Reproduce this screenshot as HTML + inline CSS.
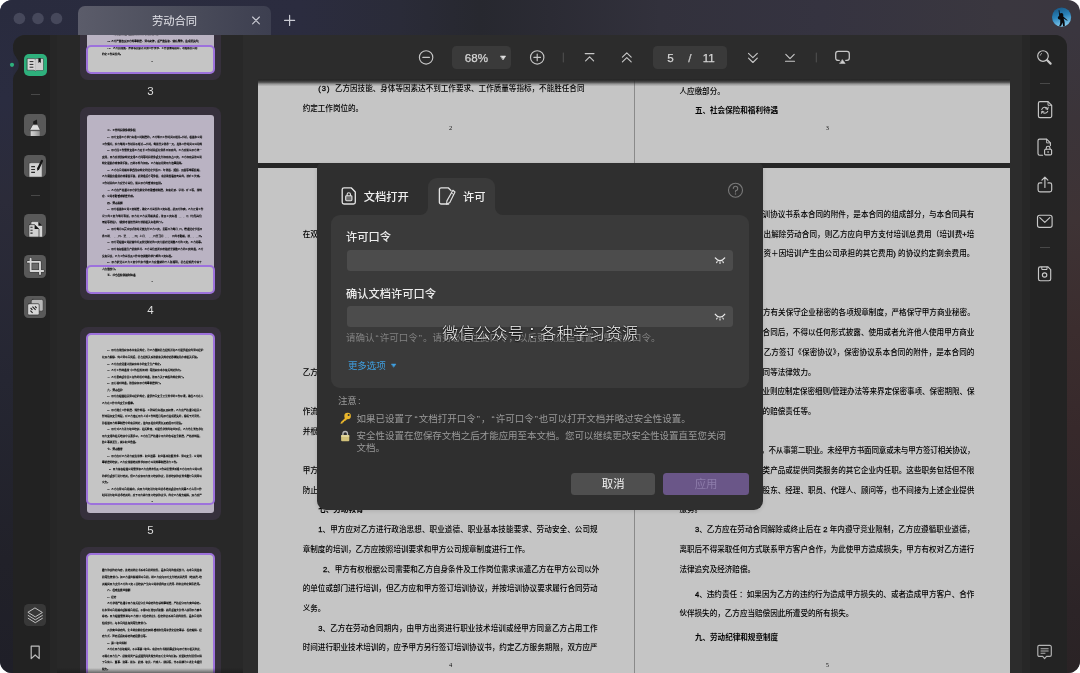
<!DOCTYPE html>
<html lang="zh-CN"><head><meta charset="utf-8"><title>劳动合同</title>
<style>
*{box-sizing:border-box;margin:0;padding:0}
html,body{width:1080px;height:673px;overflow:hidden;background:#fff}
body{font-family:"Liberation Sans","Noto Sans CJK SC",sans-serif;-webkit-font-smoothing:antialiased}
#w{position:absolute;left:0;top:0;width:1080px;height:673px;border-radius:12px;overflow:hidden;will-change:transform;
 background:linear-gradient(90deg,#292b3e 0px,#2b2c3f 300px,#2a2b38 400px,#27282f 480px,#2b2b34 550px,#32313c 660px,#353340 820px,#3a373f 1000px,#3a363f 1080px);}
#ls{position:absolute;left:0;top:0;width:20px;height:673px;background:linear-gradient(180deg,#292b3e 0px,#2a2c40 100px,#2b2b39 200px,#252632 380px,#212129 560px,#1f1f28 673px)}
#rstrip{position:absolute;left:1060px;top:30px;width:20px;height:643px;background:linear-gradient(180deg,#3a363f 0px,#3b3439 90px,#3e3335 190px,#3b2d2e 300px,#37292b 400px,#31272a 500px,#2c2427 580px,#2a2325 643px)}
.abs{position:absolute}
#inner{position:absolute;left:13px;top:35px;width:1054px;height:640px;border-radius:12px 12px 0 0;overflow:hidden;background:#292929}
#sb{position:absolute;left:0;top:0;width:44px;height:640px;background:linear-gradient(90deg,#222222 0,#222222 37px,#262626 37px)}
#tp{position:absolute;left:44px;top:0;width:186px;height:640px;background:#282828;overflow:hidden}
#main{position:absolute;left:230px;top:0;width:779px;height:640px;background:#2c2c2c;overflow:hidden}
#rs{position:absolute;left:1009px;top:0;width:45px;height:640px;background:linear-gradient(90deg,#272727 0,#272727 8px,#232323 8px)}
#tb{position:absolute;left:0;top:0;width:779px;height:43.5px;background:#2c2c2c}
.tsh{position:absolute;top:42.6px;height:8.6px;background:linear-gradient(180deg,rgba(38,38,38,1) 0,rgba(38,38,38,1) 1.2px,rgba(38,38,38,.92) 2.8px,rgba(38,38,38,.7) 4.4px,rgba(38,38,38,.4) 5.6px,rgba(38,38,38,.18) 6.8px,rgba(38,38,38,0) 8.6px)}
.box{position:absolute;top:11.4px;height:22.3px;border-radius:4.5px;background:#3a3a3a}
.tbt{-webkit-text-stroke:.25px #d6d6d6;position:absolute;top:11.5px;height:22.3px;line-height:22.3px;font-size:11.6px;color:#d6d6d6;text-align:center;white-space:nowrap}
.pg{position:absolute;background:#c5c5c5;overflow:hidden;width:376px}
.l{position:absolute;height:12px;line-height:12px;font-size:7.57px;font-weight:500;color:#000;white-space:nowrap;font-family:"Liberation Sans","Noto Sans CJK SC",sans-serif}
.l.b{font-weight:700}
.d{-webkit-text-stroke:.28px #000}
.l.j{text-align:justify;text-align-last:justify}
.pn{position:absolute;height:10px;line-height:10px;font-size:6.4px;text-align:center;color:#111;font-family:"Liberation Serif",serif}
.card{position:absolute;left:23.2px;width:140.6px;height:192.4px;border-radius:8px;background:#36303c}
.tpg{position:absolute;left:6.8px;top:7.5px;width:127.2px;height:178px;border-radius:3px;background:#bab3c3;overflow:hidden}
.tin .l{-webkit-text-stroke:.3px #000}
.tin .pn{-webkit-text-stroke:.4px #000}
.tin{position:absolute;left:0;top:0;width:376px;height:531.8px;transform-origin:0 0;transform:scale(0.3383,0.3338)}
.vpb{position:absolute;left:0;width:127.2px;border-radius:4.5px;background:#c5c5c5}
.vp{position:absolute;left:6.2px;width:128.4px;border:2px solid #9d71dc;border-radius:5px}
.tl{position:absolute;left:23.2px;width:140.4px;height:16px;line-height:16px;text-align:center;font-size:11.5px;color:#dedede}
.ib{position:absolute;left:11.1px;width:22.4px;height:22.4px;border-radius:4.5px;background:#595959}
.sep{position:absolute;height:1px;background:#484848}
#modal{position:absolute;left:317.3px;top:162.5px;width:445.6px;height:347px;border-radius:5px 5px 9px 9px;background:#2f2f2f;box-shadow:0 1px 4px rgba(0,0,0,.12)}
#panel{position:absolute;left:13.7px;top:52.5px;width:417.8px;height:172.5px;border-radius:9px;background:#3a3a3a}
#atab{position:absolute;left:111.1px;top:15.3px;width:67.1px;height:40px;border-radius:9px 9px 0 0;background:#3a3a3a}
.mt{position:absolute;white-space:nowrap}
.lab{font-size:11.25px;font-weight:500;color:#ececec;height:16px;line-height:16px}
.inp{position:absolute;left:29.3px;width:386.4px;height:20.9px;border-radius:3.5px;background:#4c4c4c}
.q{margin:0 1px}
.note{font-size:9.48px;color:#9a9a9a;height:13px;line-height:13px;letter-spacing:0}
.btn{position:absolute;top:310.8px;height:21.6px;line-height:23.8px;border-radius:3.5px;text-align:center;font-size:11.4px}
</style></head><body>
<div id="w">
<div id="ls"></div><div id="rstrip"></div>
<div class="abs" style="left:78px;top:5.5px;width:193px;height:30px;border-radius:7px 7px 0 0;background:linear-gradient(90deg,#5b5c6a 0%,#4c4e5c 50%,#3d3f50 100%)"></div>
<div class="abs" style="left:78px;top:11.5px;width:193px;height:18px;line-height:18px;text-align:center;font-size:11.3px;color:#e4e4ea;white-space:nowrap">劳动合同</div>
<div id="inner">
<div id="sb"></div>
<div id="tp">
<div class="card" style="top:-147.5px">
<div class="tpg">
<div class="vpb" style="top:150.4px;height:28.4px"></div>
<div class="tin">
<div class="l" style="left:60.0px;top:392.7px;"><span class="d">2</span>、乙方有下列情形之一的，甲方可以解除本合同：</div>
<div class="l" style="left:60.0px;top:412.4px;"><span class="d">(1)</span> 乙方在试用期间被证明不符合录用条件的；</div>
<div class="l" style="left:60.0px;top:432.1px;"><span class="d">(2)</span> 乙方严重违反甲方规章制度、劳动纪律，或严重失职、营私舞弊，造成损失的；</div>
<div class="l" style="left:60.0px;top:451.8px;"><span class="d" style="letter-spacing:1.1px">(3)</span>&nbsp; 乙方因技能、身体等因素达不到工作要求、工作质量等指标，不能胜任合同</div>
<div class="l" style="left:44.5px;top:472.2px;">约定工作岗位的。</div>
<div class="pn" style="left:0;width:385px;top:492.4px">2</div>
</div></div>
<div class="vp" style="top:157.9px;height:28.4px"></div>
</div>
<div class="tl" style="top:47.5px">3</div>
<div class="card" style="top:72.4px">
<div class="tpg">
<div class="vpb" style="top:150.4px;height:28.4px"></div>
<div class="tin">
<div class="l b" style="left:60.0px;top:41.3px;">三、工作时间和休息休假</div>
<div class="l j" style="left:60.0px;top:61.0px;width:279.5px;"><span class="d">1</span>、甲方安排乙方执行标准工时制度的，乙方每日工作时间不超过<span class="d">8</span>小时，根据本公司</div>
<div class="l" style="left:44.5px;top:80.7px;">工作情况，实行每周工作时间不超过<span class="d">40</span>小时，每周至少休息一天，具体工作时间以公司规</div>
<div class="l j" style="left:60.0px;top:100.4px;width:279.5px;"><span class="d">2</span>、甲方因工作需要安排乙方延长工作时间或在休息日加班的，乙方应服从甲方统一</div>
<div class="l j" style="left:44.5px;top:120.1px;width:295.0px;">安排，甲方应按国家规定安排乙方同等时间补休或支付加班加点工资，乙方加班须按公司</div>
<div class="l" style="left:44.5px;top:139.8px;">规定提前办理审批手续，否则不视为加班。乙方有权拒绝甲方违章指挥。</div>
<div class="l j" style="left:60.0px;top:159.5px;width:279.5px;"><span class="d">3</span>、乙方在合同期内享受国家规定的法定节假日、年休假、婚假、丧假等带薪假期，</div>
<div class="l j" style="left:44.5px;top:179.2px;width:295.0px;">乙方请假应提前办理请假手续，经批准后方可休假，未经批准擅自离岗的，按旷工处理。</div>
<div class="l" style="left:44.5px;top:198.9px;">工作时间内乙方应坚守岗位，服从甲方的管理和安排。</div>
<div class="l j" style="left:60.0px;top:218.6px;width:279.5px;"><span class="d">4</span>、乙方应严格遵守甲方依法制定的考勤管理制度，如有迟到、早退、旷工等，按规</div>
<div class="l" style="left:44.5px;top:238.3px;">定、公司考勤管理制度处理。</div>
<div class="l b" style="left:60.0px;top:258.0px;">四、劳动报酬</div>
<div class="l j" style="left:60.0px;top:277.7px;width:279.5px;"><span class="d">1</span>、甲方根据本公司工资制度，确定乙方岗位的工资标准，经双方协商，乙方正常工作</div>
<div class="l j" style="left:44.5px;top:297.4px;width:295.0px;">况下的工资为每月税前，甲方在乙方试用期满后，按其工资标准<span class="d">______</span>元（包括岗位</div>
<div class="l" style="left:44.5px;top:317.1px;">津贴等补贴），（绩效考核结果另行按照相关标准执行）。</div>
<div class="l j" style="left:60.0px;top:336.8px;width:279.5px;"><span class="d">2</span>、甲方每月以货币形式按时足额支付乙方工资，发薪日为每月<span class="d">_</span>日，若遇法定节假日</div>
<div class="l" style="left:44.5px;top:356.5px;">息日则<span class="d">______</span>日、至<span class="d">______</span>日；上月<span class="d">______</span>日至当月<span class="d">______</span>日的考勤期，按<span class="d">______</span>日。</div>
<div class="l" style="left:60.0px;top:376.2px;"><span class="d">3</span>、甲方可根据公司经营状况及依法制定的工资分配办法调整乙方的工资，乙方同意。</div>
<div class="l j" style="left:60.0px;top:395.9px;width:279.5px;"><span class="d">4</span>、甲方有权根据生产经营状况、乙方岗位变更和考核结果调整乙方的工资待遇，乙方</div>
<div class="l" style="left:44.5px;top:415.6px;">没有异议，乙方工作岗位及工作内容调整的执行新的工资标准。</div>
<div class="l j" style="left:60.0px;top:435.3px;width:279.5px;"><span class="d">5</span>、甲方依法从乙方工资中代扣代缴乙方应缴纳的个人所得税，社会保险费中由个</div>
<div class="l" style="left:44.5px;top:455.0px;">人应缴部分。</div>
<div class="l b" style="left:60.0px;top:474.7px;">五、社会保险和福利待遇</div>
<div class="pn" style="left:0;width:385px;top:492.4px">3</div>
</div></div>
<div class="vp" style="top:157.9px;height:28.4px"></div>
</div>
<div class="tl" style="top:267.4px">4</div>
<div class="card" style="top:292.3px">
<div class="tpg">
<div class="vpb" style="top:-1.9px;height:172.3px"></div>
<div class="tin">
<div class="l j" style="left:60.0px;top:41.3px;width:279.5px;"><span class="d">1</span>、甲方应按国家和本市有关规定，为乙方缴纳社会保险并向乙方提供相应的劳动保护</div>
<div class="l" style="left:44.5px;top:61.0px;">在双方解除、终止劳动合同后，社会保险关系按照有关规定转移接续并办理相关手续。</div>
<div class="l" style="left:60.0px;top:80.7px;"><span class="d">2</span>、乙方应自觉遵守国家和本市的安全生产规定。</div>
<div class="l" style="left:60.0px;top:100.4px;"><span class="d">3</span>、乙方工伤待遇按《工伤保险条例》等国家和本市有关规定执行。</div>
<div class="l" style="left:60.0px;top:120.1px;"><span class="d">4</span>、乙方患病或非因工负伤的医疗待遇，按甲方关于病假的规定执行。</div>
<div class="l" style="left:60.0px;top:139.8px;"><span class="d">5</span>、其它福利待遇，按国家和甲方规章制度执行。</div>
<div class="l b" style="left:60.0px;top:159.5px;">六、劳动保护</div>
<div class="l j" style="left:60.0px;top:179.2px;width:279.5px;"><span class="d">1</span>、甲方应根据相关劳动保护规定，提供符合安全卫生要求的工作环境，确保乙方在人</div>
<div class="l" style="left:44.5px;top:198.9px;">乙方在工作中的安全和健康。</div>
<div class="l j" style="left:60.0px;top:218.6px;width:279.5px;"><span class="d">2</span>、甲方建立工作制度、操作规程、工种岗位标准及其纪律，乙方应严格遵守相关工</div>
<div class="l j" style="left:44.5px;top:238.3px;width:295.0px;">作流程和安全规程，对乙方违反甲方上述工作规范且给甲方造成损失的，除给予处罚外，</div>
<div class="l" style="left:44.5px;top:258.0px;">并根据甲方规章制度中的有关规定，追究其相应的责任及赔偿甲方损失。</div>
<div class="l j" style="left:60.0px;top:277.7px;width:279.5px;"><span class="d">3</span>、甲方对乙方进行职业培训、相关教育，对提升必要的职业知识，乙方也主要务必在</div>
<div class="l j" style="left:44.5px;top:297.4px;width:295.0px;">甲方安排的相关培训中认真学习，乙方应当严格遵守甲方的各项安全制度，严格按规程，</div>
<div class="l" style="left:44.5px;top:317.1px;">防止事故发生，减少职业危害。</div>
<div class="l b" style="left:60.0px;top:336.8px;">七、劳动教育</div>
<div class="l j" style="left:60.0px;top:356.5px;width:279.5px;"><span class="d">1</span>、甲方应对乙方进行政治思想、职业道德、职业基本技能要求、劳动安全、公司规</div>
<div class="l" style="left:44.5px;top:376.2px;">章制度的培训，乙方应按照培训要求和甲方公司规章制度进行工作。</div>
<div class="l j" style="left:64.7px;top:395.9px;width:274.9px;"><span class="d">2</span>、甲方有权根据公司需要和乙方自身条件及工作岗位需求派遣乙方在甲方公司以外</div>
<div class="l j" style="left:44.5px;top:415.6px;width:295.0px;">的单位或部门进行培训，但乙方应和甲方签订培训协议，并按培训协议要求履行合同劳动</div>
<div class="l" style="left:44.5px;top:435.3px;">义务。</div>
<div class="l j" style="left:60.0px;top:455.0px;width:279.5px;"><span class="d">3</span>、乙方在劳动合同期内，由甲方出资进行职业技术培训或经甲方同意乙方占用工作</div>
<div class="l j" style="left:44.5px;top:474.7px;width:295.0px;">时间进行职业技术培训的，应予甲方另行签订培训协议书，约定乙方服务期限，双方应严</div>
<div class="pn" style="left:0;width:385px;top:492.4px">4</div>
</div></div>
<div class="vp" style="top:5.6px;height:172.3px"></div>
</div>
<div class="tl" style="top:487.3px">5</div>
<div class="card" style="top:512.2px">
<div class="tpg">
<div class="vpb" style="top:-1.9px;height:201.9px"></div>
<div class="tin">
<div class="l j" style="left:44.5px;top:41.3px;width:295.0px;">履行协议约定内容，该培训协议书系本合同的附件，是本合同的组成部分，与本合同具有</div>
<div class="l j" style="left:44.5px;top:61.0px;width:295.0px;">同等法律效力。如乙方提出解除劳动合同，则乙方应向甲方支付培训总费用（培训费<span class="d">+</span>培</div>
<div class="l j" style="left:44.5px;top:80.7px;width:295.0px;">训期间甲方支付乙方的工资＋因培训产生由公司承担的其它费用<span class="d">)</span> 的协议约定剩余费用。</div>
<div class="l b" style="left:60.0px;top:100.4px;">八、保密及竞业限制</div>
<div class="l" style="left:60.0px;top:120.1px;"><span class="d">1</span>、保密</div>
<div class="l j" style="left:60.0px;top:139.8px;width:279.5px;">乙方承诺严格遵守甲方有关保守企业秘密的各项规章制度，严格保守甲方商业秘密。</div>
<div class="l j" style="left:44.5px;top:159.5px;width:295.0px;">在本劳动合同期内或解除合同后，不得以任何形式披露、使用或者允许他人使用甲方商业</div>
<div class="l j" style="left:44.5px;top:179.2px;width:295.0px;">秘密。甲方根据需要另与乙方签订《保密协议》，保密协议系本合同的附件，是本合同的</div>
<div class="l" style="left:44.5px;top:198.9px;">组成部分，与本合同具有同等法律效力。</div>
<div class="l j" style="left:60.0px;top:218.6px;width:279.5px;letter-spacing:-0.15px;">凡涉商业秘密的，企业则应制定保密细则<span class="d">/</span>管理办法等来界定保密事项、保密期限、保</div>
<div class="l" style="left:44.5px;top:238.3px;">密方式、泄密后侵犯秘密的赔偿责任等。</div>
<div class="l" style="left:60.0px;top:258.0px;"><span class="d">2</span>、第二职业限制</div>
<div class="l j" style="left:60.0px;top:277.7px;width:279.5px;letter-spacing:-0.23px;">乙方在甲方任职期间，不从事第二职业。未经甲方书面同意或未与甲方签订相关协议，</div>
<div class="l j" style="left:44.5px;top:297.4px;width:295.0px;">不得在甲方生产、经营同类产品或提供同类服务的其它企业内任职。这些职务包括但不限</div>
<div class="l j" style="left:44.5px;top:317.1px;width:295.0px;">于合伙人、董事、监事、股东、经理、职员、代理人、顾问等，也不间接为上述企业提供</div>
<div class="l" style="left:44.5px;top:336.8px;">服务。</div>
<div class="l j" style="left:60.0px;top:356.5px;width:279.5px;"><span class="d">3</span>、乙方应在劳动合同解除或终止后在 <span class="d">2</span> 年内遵守竞业限制，乙方应遵循职业道德，</div>
<div class="l j" style="left:44.5px;top:376.2px;width:295.0px;">离职后不得采取任何方式联系甲方客户合作，为此使甲方造成损失，甲方有权对乙方进行</div>
<div class="l" style="left:44.5px;top:395.9px;">法律追究及经济赔偿。</div>
<div class="l j" style="left:60.0px;top:421.0px;width:279.5px;"><span class="d">4</span>、违约责任 ：如果因为乙方的违约行为造成甲方损失的、或者造成甲方客户、合作</div>
<div class="l" style="left:44.5px;top:440.4px;">伙伴损失的，乙方应当赔偿因此所遭受的所有损失。</div>
<div class="l b" style="left:60.0px;top:464.7px;">九、劳动纪律和规章制度</div>
<div class="pn" style="left:0;width:385px;top:492.4px">5</div>
</div></div>
<div class="vp" style="top:5.6px;height:201.9px"></div>
</div>
<div class="abs" style="left:0;bottom:0;width:186px;height:7px;background:linear-gradient(180deg,rgba(24,24,24,0),rgba(24,24,24,.75))"></div>
</div>
<div id="main">
<div class="pg" style="left:15.2px;top:0.0px;height:127.8px;width:376.0px"><div class="abs" style="left:0;top:-404.3px;width:376px;height:531.8px"><div class="l" style="left:60.0px;top:392.7px;"><span class="d">2</span>、乙方有下列情形之一的，甲方可以解除本合同：</div>
<div class="l" style="left:60.0px;top:412.4px;"><span class="d">(1)</span> 乙方在试用期间被证明不符合录用条件的；</div>
<div class="l" style="left:60.0px;top:432.1px;"><span class="d">(2)</span> 乙方严重违反甲方规章制度、劳动纪律，或严重失职、营私舞弊，造成损失的；</div>
<div class="l" style="left:60.0px;top:451.8px;"><span class="d" style="letter-spacing:1.1px">(3)</span>&nbsp; 乙方因技能、身体等因素达不到工作要求、工作质量等指标，不能胜任合同</div>
<div class="l" style="left:44.5px;top:472.2px;">约定工作岗位的。</div>
<div class="pn" style="left:0;width:385px;top:492.4px">2</div></div></div>
<div class="pg" style="left:391.9px;top:0.0px;height:127.8px;width:375.2px"><div class="abs" style="left:0;top:-404.3px;width:376px;height:531.8px"><div class="l b" style="left:60.0px;top:41.3px;">三、工作时间和休息休假</div>
<div class="l j" style="left:60.0px;top:61.0px;width:279.5px;"><span class="d">1</span>、甲方安排乙方执行标准工时制度的，乙方每日工作时间不超过<span class="d">8</span>小时，根据本公司</div>
<div class="l" style="left:44.5px;top:80.7px;">工作情况，实行每周工作时间不超过<span class="d">40</span>小时，每周至少休息一天，具体工作时间以公司规</div>
<div class="l j" style="left:60.0px;top:100.4px;width:279.5px;"><span class="d">2</span>、甲方因工作需要安排乙方延长工作时间或在休息日加班的，乙方应服从甲方统一</div>
<div class="l j" style="left:44.5px;top:120.1px;width:295.0px;">安排，甲方应按国家规定安排乙方同等时间补休或支付加班加点工资，乙方加班须按公司</div>
<div class="l" style="left:44.5px;top:139.8px;">规定提前办理审批手续，否则不视为加班。乙方有权拒绝甲方违章指挥。</div>
<div class="l j" style="left:60.0px;top:159.5px;width:279.5px;"><span class="d">3</span>、乙方在合同期内享受国家规定的法定节假日、年休假、婚假、丧假等带薪假期，</div>
<div class="l j" style="left:44.5px;top:179.2px;width:295.0px;">乙方请假应提前办理请假手续，经批准后方可休假，未经批准擅自离岗的，按旷工处理。</div>
<div class="l" style="left:44.5px;top:198.9px;">工作时间内乙方应坚守岗位，服从甲方的管理和安排。</div>
<div class="l j" style="left:60.0px;top:218.6px;width:279.5px;"><span class="d">4</span>、乙方应严格遵守甲方依法制定的考勤管理制度，如有迟到、早退、旷工等，按规</div>
<div class="l" style="left:44.5px;top:238.3px;">定、公司考勤管理制度处理。</div>
<div class="l b" style="left:60.0px;top:258.0px;">四、劳动报酬</div>
<div class="l j" style="left:60.0px;top:277.7px;width:279.5px;"><span class="d">1</span>、甲方根据本公司工资制度，确定乙方岗位的工资标准，经双方协商，乙方正常工作</div>
<div class="l j" style="left:44.5px;top:297.4px;width:295.0px;">况下的工资为每月税前，甲方在乙方试用期满后，按其工资标准<span class="d">______</span>元（包括岗位</div>
<div class="l" style="left:44.5px;top:317.1px;">津贴等补贴），（绩效考核结果另行按照相关标准执行）。</div>
<div class="l j" style="left:60.0px;top:336.8px;width:279.5px;"><span class="d">2</span>、甲方每月以货币形式按时足额支付乙方工资，发薪日为每月<span class="d">_</span>日，若遇法定节假日</div>
<div class="l" style="left:44.5px;top:356.5px;">息日则<span class="d">______</span>日、至<span class="d">______</span>日；上月<span class="d">______</span>日至当月<span class="d">______</span>日的考勤期，按<span class="d">______</span>日。</div>
<div class="l" style="left:60.0px;top:376.2px;"><span class="d">3</span>、甲方可根据公司经营状况及依法制定的工资分配办法调整乙方的工资，乙方同意。</div>
<div class="l j" style="left:60.0px;top:395.9px;width:279.5px;"><span class="d">4</span>、甲方有权根据生产经营状况、乙方岗位变更和考核结果调整乙方的工资待遇，乙方</div>
<div class="l" style="left:44.5px;top:415.6px;">没有异议，乙方工作岗位及工作内容调整的执行新的工资标准。</div>
<div class="l j" style="left:60.0px;top:435.3px;width:279.5px;"><span class="d">5</span>、甲方依法从乙方工资中代扣代缴乙方应缴纳的个人所得税，社会保险费中由个</div>
<div class="l" style="left:44.5px;top:455.0px;">人应缴部分。</div>
<div class="l b" style="left:60.0px;top:474.7px;">五、社会保险和福利待遇</div>
<div class="pn" style="left:0;width:385px;top:492.4px">3</div></div></div>
<div class="pg" style="left:15.2px;top:132.7px;height:520.0px;width:376.0px"><div class="abs" style="left:0;top:0.0px;width:376px;height:531.8px"><div class="l j" style="left:60.0px;top:41.3px;width:279.5px;"><span class="d">1</span>、甲方应按国家和本市有关规定，为乙方缴纳社会保险并向乙方提供相应的劳动保护</div>
<div class="l" style="left:44.5px;top:61.0px;">在双方解除、终止劳动合同后，社会保险关系按照有关规定转移接续并办理相关手续。</div>
<div class="l" style="left:60.0px;top:80.7px;"><span class="d">2</span>、乙方应自觉遵守国家和本市的安全生产规定。</div>
<div class="l" style="left:60.0px;top:100.4px;"><span class="d">3</span>、乙方工伤待遇按《工伤保险条例》等国家和本市有关规定执行。</div>
<div class="l" style="left:60.0px;top:120.1px;"><span class="d">4</span>、乙方患病或非因工负伤的医疗待遇，按甲方关于病假的规定执行。</div>
<div class="l" style="left:60.0px;top:139.8px;"><span class="d">5</span>、其它福利待遇，按国家和甲方规章制度执行。</div>
<div class="l b" style="left:60.0px;top:159.5px;">六、劳动保护</div>
<div class="l j" style="left:60.0px;top:179.2px;width:279.5px;"><span class="d">1</span>、甲方应根据相关劳动保护规定，提供符合安全卫生要求的工作环境，确保乙方在人</div>
<div class="l" style="left:44.5px;top:198.9px;">乙方在工作中的安全和健康。</div>
<div class="l j" style="left:60.0px;top:218.6px;width:279.5px;"><span class="d">2</span>、甲方建立工作制度、操作规程、工种岗位标准及其纪律，乙方应严格遵守相关工</div>
<div class="l j" style="left:44.5px;top:238.3px;width:295.0px;">作流程和安全规程，对乙方违反甲方上述工作规范且给甲方造成损失的，除给予处罚外，</div>
<div class="l" style="left:44.5px;top:258.0px;">并根据甲方规章制度中的有关规定，追究其相应的责任及赔偿甲方损失。</div>
<div class="l j" style="left:60.0px;top:277.7px;width:279.5px;"><span class="d">3</span>、甲方对乙方进行职业培训、相关教育，对提升必要的职业知识，乙方也主要务必在</div>
<div class="l j" style="left:44.5px;top:297.4px;width:295.0px;">甲方安排的相关培训中认真学习，乙方应当严格遵守甲方的各项安全制度，严格按规程，</div>
<div class="l" style="left:44.5px;top:317.1px;">防止事故发生，减少职业危害。</div>
<div class="l b" style="left:60.0px;top:336.8px;">七、劳动教育</div>
<div class="l j" style="left:60.0px;top:356.5px;width:279.5px;"><span class="d">1</span>、甲方应对乙方进行政治思想、职业道德、职业基本技能要求、劳动安全、公司规</div>
<div class="l" style="left:44.5px;top:376.2px;">章制度的培训，乙方应按照培训要求和甲方公司规章制度进行工作。</div>
<div class="l j" style="left:64.7px;top:395.9px;width:274.9px;"><span class="d">2</span>、甲方有权根据公司需要和乙方自身条件及工作岗位需求派遣乙方在甲方公司以外</div>
<div class="l j" style="left:44.5px;top:415.6px;width:295.0px;">的单位或部门进行培训，但乙方应和甲方签订培训协议，并按培训协议要求履行合同劳动</div>
<div class="l" style="left:44.5px;top:435.3px;">义务。</div>
<div class="l j" style="left:60.0px;top:455.0px;width:279.5px;"><span class="d">3</span>、乙方在劳动合同期内，由甲方出资进行职业技术培训或经甲方同意乙方占用工作</div>
<div class="l j" style="left:44.5px;top:474.7px;width:295.0px;">时间进行职业技术培训的，应予甲方另行签订培训协议书，约定乙方服务期限，双方应严</div>
<div class="pn" style="left:0;width:385px;top:492.4px">4</div></div></div>
<div class="pg" style="left:391.9px;top:132.7px;height:520.0px;width:375.2px"><div class="abs" style="left:0;top:0.0px;width:376px;height:531.8px"><div class="l j" style="left:44.5px;top:41.3px;width:295.0px;">履行协议约定内容，该培训协议书系本合同的附件，是本合同的组成部分，与本合同具有</div>
<div class="l j" style="left:44.5px;top:61.0px;width:295.0px;">同等法律效力。如乙方提出解除劳动合同，则乙方应向甲方支付培训总费用（培训费<span class="d">+</span>培</div>
<div class="l j" style="left:44.5px;top:80.7px;width:295.0px;">训期间甲方支付乙方的工资＋因培训产生由公司承担的其它费用<span class="d">)</span> 的协议约定剩余费用。</div>
<div class="l b" style="left:60.0px;top:100.4px;">八、保密及竞业限制</div>
<div class="l" style="left:60.0px;top:120.1px;"><span class="d">1</span>、保密</div>
<div class="l j" style="left:60.0px;top:139.8px;width:279.5px;">乙方承诺严格遵守甲方有关保守企业秘密的各项规章制度，严格保守甲方商业秘密。</div>
<div class="l j" style="left:44.5px;top:159.5px;width:295.0px;">在本劳动合同期内或解除合同后，不得以任何形式披露、使用或者允许他人使用甲方商业</div>
<div class="l j" style="left:44.5px;top:179.2px;width:295.0px;">秘密。甲方根据需要另与乙方签订《保密协议》，保密协议系本合同的附件，是本合同的</div>
<div class="l" style="left:44.5px;top:198.9px;">组成部分，与本合同具有同等法律效力。</div>
<div class="l j" style="left:60.0px;top:218.6px;width:279.5px;letter-spacing:-0.15px;">凡涉商业秘密的，企业则应制定保密细则<span class="d">/</span>管理办法等来界定保密事项、保密期限、保</div>
<div class="l" style="left:44.5px;top:238.3px;">密方式、泄密后侵犯秘密的赔偿责任等。</div>
<div class="l" style="left:60.0px;top:258.0px;"><span class="d">2</span>、第二职业限制</div>
<div class="l j" style="left:60.0px;top:277.7px;width:279.5px;letter-spacing:-0.23px;">乙方在甲方任职期间，不从事第二职业。未经甲方书面同意或未与甲方签订相关协议，</div>
<div class="l j" style="left:44.5px;top:297.4px;width:295.0px;">不得在甲方生产、经营同类产品或提供同类服务的其它企业内任职。这些职务包括但不限</div>
<div class="l j" style="left:44.5px;top:317.1px;width:295.0px;">于合伙人、董事、监事、股东、经理、职员、代理人、顾问等，也不间接为上述企业提供</div>
<div class="l" style="left:44.5px;top:336.8px;">服务。</div>
<div class="l j" style="left:60.0px;top:356.5px;width:279.5px;"><span class="d">3</span>、乙方应在劳动合同解除或终止后在 <span class="d">2</span> 年内遵守竞业限制，乙方应遵循职业道德，</div>
<div class="l j" style="left:44.5px;top:376.2px;width:295.0px;">离职后不得采取任何方式联系甲方客户合作，为此使甲方造成损失，甲方有权对乙方进行</div>
<div class="l" style="left:44.5px;top:395.9px;">法律追究及经济赔偿。</div>
<div class="l j" style="left:60.0px;top:421.0px;width:279.5px;"><span class="d">4</span>、违约责任 ：如果因为乙方的违约行为造成甲方损失的、或者造成甲方客户、合作</div>
<div class="l" style="left:44.5px;top:440.4px;">伙伴损失的，乙方应当赔偿因此所遭受的所有损失。</div>
<div class="l b" style="left:60.0px;top:464.7px;">九、劳动纪律和规章制度</div>
<div class="pn" style="left:0;width:385px;top:492.4px">5</div></div></div>
<div class="abs" style="left:15.2px;top:127.5px;width:751.9px;height:5.4px;background:#262626"></div>
<div class="abs" style="left:391px;top:0;width:1px;height:127.5px;background:#8a8a8a"></div>
<div class="abs" style="left:391px;top:132.7px;width:1px;height:520px;background:#8a8a8a"></div>
<div class="tsh" style="left:15.2px;width:751.9px"></div>
<div id="tb">
<div class="box" style="left:209px;width:58.9px"></div>
<div class="tbt" style="left:214.4px;width:38px">68%</div>
<div class="box" style="left:410.1px;width:73.6px"></div>
<div class="tbt" style="left:417.6px;width:20px">5</div>
<div class="tbt" style="left:436.8px;width:20px;color:#c4c4c4">/</div>
<div class="tbt" style="left:455.7px;width:20px">11</div>
</div>
</div>
<div id="rs"></div>
<div class="ib" style="top:78.8px"></div>
<div class="ib" style="top:119.7px"></div>
<div class="ib" style="top:179.4px"></div>
<div class="ib" style="top:220.2px"></div>
<div class="ib" style="top:261.1px"></div>
<div class="ib" style="top:18.7px;background:#2eb07c;border-radius:5px;height:22.6px;width:22.6px;left:11px"></div>
<div class="ib" style="top:569.1px;background:#383838"></div>
<div class="sep" style="left:17.5px;width:9.5px;top:59.3px"></div>
<div class="sep" style="left:17.5px;width:9.5px;top:160.2px"></div>
<div class="sep" style="left:1027px;width:9.5px;top:48.2px"></div>
<div class="sep" style="left:1027px;width:9.5px;top:212.0px"></div>
</div>
<div id="modal">
<div id="atab"></div>
<svg class="abs" style="left:103.1px;top:44.5px" width="8" height="8" viewBox="0 0 8 8"><path d="M8 0 V8 H0 A8 8 0 0 0 8 0Z" fill="#3a3a3a"/></svg>
<svg class="abs" style="left:178.2px;top:44.5px" width="8" height="8" viewBox="0 0 8 8"><path d="M0 0 V8 H8 A8 8 0 0 1 0 0Z" fill="#3a3a3a"/></svg>
<div id="panel"></div>
<div class="mt lab" style="left:46.5px;top:26.2px;color:#f0f0f0">文档打开</div>
<div class="mt lab" style="left:145.6px;top:26.2px;color:#f0f0f0">许可</div>
<div class="mt lab" style="left:28.8px;top:66.5px">许可口令</div>
<div class="inp" style="top:87.3px"></div>
<div class="mt lab" style="left:28.8px;top:123.4px">确认文档许可口令</div>
<div class="inp" style="top:143.8px"></div>
<div class="mt note" style="left:28.8px;top:168.2px;color:#828282;font-size:9.5px">请确认<span class="q">“</span>许可口令<span class="q">”</span>。请务必记住此口令，以后更改这些设置时需要此口令。</div>
<div class="mt note" style="left:30.6px;top:196.4px;color:#3f9fe0">更多选项</div>
<div class="mt note" style="left:20.6px;top:231.5px">注意<span style="margin-left:1.2px">:</span></div>
<div class="mt note" style="left:39.3px;top:249.0px;letter-spacing:.03px">如果已设置了<span class="q">“</span>文档打开口令<span class="q">”</span>，<span class="q">“</span>许可口令<span class="q">”</span>也可以打开文档并略过安全性设置。</div>
<div class="mt note" style="left:39.3px;top:266.8px">安全性设置在您保存文档之后才能应用至本文档。您可以继续更改安全性设置直至您关闭</div>
<div class="mt note" style="left:39.3px;top:278.9px">文档。</div>
<div class="btn" style="left:253.7px;width:84.5px;background:#4f4f4f;color:#f2f2f2">取消</div>
<div class="btn" style="left:346px;width:85.6px;background:#6a5688;color:#8d7caa">应用</div>
</div>
<div class="abs" style="left:442.3px;top:322.0px;height:24px;line-height:24px;font-size:15.9px;font-weight:300;color:#f4f4f4;white-space:nowrap;letter-spacing:.45px;text-shadow:0 0 2px rgba(0,0,0,.9),0 1px 1px rgba(0,0,0,.7);font-family:'Liberation Sans','Noto Sans CJK SC',sans-serif">微信公众号<span lang="zh-TW" style="font-family:'Liberation Sans','Noto Sans CJK TC',sans-serif">：</span>各种学习资源</div>
<svg class="abs" style="left:0;top:0" width="1080" height="673" viewBox="0 0 1080 673" fill="none" stroke-linecap="round" stroke-linejoin="round">
<!-- notch + active dot -->
<path d="M13 48 C13 57 18.9 57.5 18.9 64.8 C18.9 72 13 72.5 13 81 Z" fill="#292b3c"/>
<circle cx="12" cy="64.8" r="2.1" fill="#2eb07c"/>
<!-- traffic lights -->
<g fill="#46485b"><circle cx="19.4" cy="18.5" r="5.8"/><circle cx="38" cy="18.5" r="5.8"/><circle cx="56.5" cy="18.5" r="5.8"/></g>
<!-- tab close / plus -->
<g stroke="#c9cad3" stroke-width="1.1"><path d="M252.6 17 L259.4 23.8 M259.4 17 L252.6 23.8"/></g>
<g stroke="#c9cad3" stroke-width="1.2"><path d="M284.6 20.4 H294.6 M289.6 15.4 V25.4"/></g>
<!-- avatar -->
<defs><linearGradient id="av" x1="0" y1="0" x2="0.3" y2="1"><stop offset="0" stop-color="#15507c"/><stop offset=".55" stop-color="#2a84bb"/><stop offset="1" stop-color="#7cc4ea"/></linearGradient>
<clipPath id="avc"><circle cx="1061.6" cy="17.1" r="9.6"/></clipPath></defs>
<circle cx="1061.6" cy="17.1" r="9.6" fill="url(#av)"/>
<g clip-path="url(#avc)"><path d="M1058.6 10.2 L1059.4 10.3 L1059.8 13.6 C1060.6 12.9 1062 12.8 1062.8 13.6 C1063.5 14.4 1063.4 15.6 1063.2 16.4 L1067.6 20.2 L1067.2 20.7 L1063.6 18.6 L1064.6 22 L1064.8 26.5 L1063.2 26.6 L1062.4 22.6 L1061.4 25.6 L1059.4 26.8 L1059.2 26 L1060.2 23.4 L1060.2 19.6 C1058.8 19.8 1057.6 18.8 1057.8 17.6 C1058 16.6 1058.8 16.2 1059.2 15.4 Z" fill="#0a0a0c"/></g>
<!-- toolbar icons -->
<g stroke="#c6c6c6" stroke-width="1.15">
<circle cx="426.1" cy="57.4" r="6.7"/><path d="M422.8 57.4 H429.4"/>
<circle cx="537.2" cy="57.4" r="6.7"/><path d="M533.9 57.4 H540.5 M537.2 54.1 V60.7"/>
<path d="M585.2 53.6 H594 M585.6 60.8 L589.6 56.8 L593.6 60.8"/>
<path d="M622.4 57.2 L626.8 52.9 L631.2 57.2 M622.4 61.9 L626.8 57.6 L631.2 61.9"/>
<path d="M748.5 53.4 L752.9 57.7 L757.3 53.4 M748.5 58.2 L752.9 62.5 L757.3 58.2"/>
<path d="M785.8 54.4 L790 58.6 L794.2 54.4 M785.5 61.2 H794.5"/>
</g>
<g stroke="#525252" stroke-width="1"><path d="M563.3 53 V62 M816.3 53 V62"/></g>
<path d="M839.2 60.4 H838 A2.3 2.3 0 0 1 835.7 58.1 V53.7 A2.3 2.3 0 0 1 838 51.4 H847 A2.3 2.3 0 0 1 849.3 53.7 V58.1 A2.3 2.3 0 0 1 847 60.4 H845.8" stroke="#c6c6c6" stroke-width="1.3"/>
<path d="M842.5 59.7 L845.2 63.5 H839.8 Z" fill="#d0d0d0" stroke="#d0d0d0" stroke-width=".5"/>
<!-- zoom dropdown triangle -->
<path d="M500.8 56.1 H505.6 L503.2 59.6 Z" fill="#dedede" stroke="#dedede" stroke-width=".7"/>

<!-- LEFT SIDEBAR ICONS -->
<!-- reader (book) -->
<g>
<path d="M27.4 58.6 H34.2 L35.3 59.3 L36.4 58.6 H43.2 V70.2 H36.6 L35.3 71 L34 70.2 H27.4 Z" fill="#d9d9d9" stroke="#3a2f35" stroke-width=".6"/>
<path d="M35.3 59.5 V70.6" stroke="#8d8d8d" stroke-width=".5"/>
<path d="M35.6 59.3 H43 V70 H35.6Z" fill="#cdcdcd" stroke="none"/>
<path d="M29.6 61.6 H33.4 M29.6 64.4 H33.4 M29.6 67.2 H33.4" stroke="#262626" stroke-width="1" stroke-linecap="butt"/>
<path d="M38.4 58.3 H40.8 V63 L39.6 62 L38.4 63 Z" fill="#111" stroke="none"/>
</g>
<!-- highlighter -->
<defs><linearGradient id="hl" x1="0" y1="0" x2="1" y2="0"><stop offset="0" stop-color="#d2d2d2"/><stop offset=".45" stop-color="#bcbcbc"/><stop offset="1" stop-color="#8e8e8e"/></linearGradient></defs>
<g stroke="none">
<path d="M33.2 124.5 V121.6 L36.9 119.5 L37.3 124.5 Z" fill="#1c1c1c"/>
<path d="M33 124.7 H37.6 L40.3 130.2 H29.9 Z" fill="#dedede" stroke="#3a3a3a" stroke-width=".5"/>
<path d="M30.7 131 H39.8 V136 H30.7 Z" fill="url(#hl)"/>
<path d="M30.4 130.7 H40.1" stroke="#555" stroke-width=".7"/>
</g>
<!-- edit -->
<g>
<path d="M30 162.7 H41.2 A1 1 0 0 1 42.2 163.7 V177.1 H29 V163.7 A1 1 0 0 1 30 162.7 Z" fill="#d2d2d2" stroke="#3c3c3c" stroke-width=".6"/>
<path d="M31.2 166.6 H35 M31.2 169.5 H35 M31.2 172.4 H35" stroke="#2a2a2a" stroke-width="1.1" stroke-linecap="butt"/>
<path d="M41.9 161 L38.2 168.8" stroke="#161616" stroke-width="2.2" stroke-linecap="round"/>
<path d="M37.4 167.6 L39.6 168.7 L37.3 171 Z" fill="#161616"/>
</g>
<!-- organize pages -->
<g>
<path d="M31.6 221.6 H38.4 L42.6 225.8 V237.1 H31 V222.2 A.6 .6 0 0 1 31.6 221.6 Z" fill="#d6d6d6" stroke="#3a3a3a" stroke-width=".6"/>
<path d="M38.4 221.8 L42.4 225.8 H38.4 Z" fill="#141414"/>
<path d="M29.4 224.6 H34.6 L39 229 V237.1 H28.8 V225.2 A.6 .6 0 0 1 29.4 224.6 Z" fill="#cfcfcf" stroke="#2c2c2c" stroke-width=".7"/>
<path d="M34.6 224.8 L38.8 229 H34.6 Z" fill="#141414"/>
<path d="M30.4 227.3 H32.6 M30.4 230.2 H32.6 M30.4 233.1 H32.6" stroke="#2a2a2a" stroke-width="1.1" stroke-linecap="butt"/>
</g>
<!-- crop -->
<g stroke-linecap="round">
<path d="M30.6 258.7 V271 H43.2 M27.9 261.9 H40 V274.1" stroke="#383838" stroke-width="3.1"/>
<path d="M30.6 258.7 V271 H43.2 M27.9 261.9 H40 V274.1" stroke="#d6d6d6" stroke-width="1.9"/>
<rect x="32.4" y="263.6" width="5.8" height="5.6" fill="#6a6a6a" stroke="none"/>
</g>
<!-- watermark -->
<g>
<rect x="31.2" y="299.4" width="12" height="11.8" rx="1.6" fill="#b9b9b9" stroke="#333" stroke-width=".7"/>
<rect x="27.7" y="303.7" width="11.5" height="11.3" rx="1.2" fill="#d6d6d6" stroke="#2c2c2c" stroke-width=".7"/>
<path d="M30.6 308 L32.4 309.8 M32.4 306.6 L35.6 309.8 M30.4 310.6 L32.6 312.8 M35 306.4 L36.6 308" stroke="#1e1e1e" stroke-width="1.1" stroke-linecap="butt"/>
</g>
<!-- layers -->
<g stroke="#c2c2c2" stroke-width="1">
<path d="M35.3 608.1 L42.4 612.5 L35.3 616.9 L28.2 612.5 Z"/>
<path d="M28.2 615.4 L35.3 619.8 L42.4 615.4 M28.2 618.3 L35.3 622.7 L42.4 618.3"/>
</g>
<!-- bookmark -->
<path d="M31.2 646.2 H39.2 V658.6 L35.2 655 L31.2 658.6 Z" stroke="#bdbdbd" stroke-width="1.2"/>

<!-- RIGHT SIDEBAR ICONS -->
<g stroke="#c8c8c8" stroke-width="1.15">
<circle cx="1043" cy="56" r="5.3"/>
<path d="M1040.3 55.2 A2.8 2.8 0 0 1 1041.6 53.4" stroke-width=".8"/>
<path d="M1047.2 60.2 L1050.6 63.6" stroke-width="2.2"/>
<!-- convert -->
<path d="M1040 101.6 H1048 L1051.7 105.3 V116 A1.6 1.6 0 0 1 1050.1 117.6 H1040 A1.6 1.6 0 0 1 1038.4 116 V103.2 A1.6 1.6 0 0 1 1040 101.6 Z"/>
<path d="M1048 101.8 V105.3 H1051.5" stroke-width=".9"/>
<path d="M1041.8 109.4 A3.1 3.1 0 0 1 1047.6 109.2 M1047.8 111.2 A3.1 3.1 0 0 1 1042 111.4" stroke-width="1.05"/>
<path d="M1048.2 107.2 L1047.7 109.4 L1045.6 108.8 M1041.4 113.4 L1041.9 111.2 L1044 111.8" stroke-width=".9"/>
<!-- protect -->
<path d="M1042.6 155.2 H1039.6 A1.6 1.6 0 0 1 1038 153.6 V140.7 A1.6 1.6 0 0 1 1039.6 139.1 H1046.6 L1050.4 142.9 V145.6"/>
<path d="M1046.6 139.3 V142.9 H1050.2" stroke-width=".9"/>
<rect x="1044.6" y="149.2" width="7" height="5.6" rx="1.1"/>
<path d="M1046.2 149 V148.2 A1.9 1.9 0 0 1 1050 148.2 V149"/>
<path d="M1048.1 151.5 V152.6" stroke-width="1.1"/>
<!-- share -->
<path d="M1041.8 182.9 H1040 A1.9 1.9 0 0 0 1038.1 184.8 V189.9 A1.9 1.9 0 0 0 1040 191.8 H1049.8 A1.9 1.9 0 0 0 1051.7 189.9 V184.8 A1.9 1.9 0 0 0 1049.8 182.9 H1048"/>
<path d="M1044.9 187.4 V177.2 M1041.9 180.2 L1044.9 177.1 L1047.9 180.2"/>
<!-- mail -->
<rect x="1037.5" y="215.2" width="14.6" height="12.2" rx="2.2"/>
<path d="M1039.8 217.7 L1044.8 222.3 L1049.8 217.7"/>
<!-- save -->
<path d="M1040.2 266.9 H1048 L1050.7 269.6 V279 A1.7 1.7 0 0 1 1049 280.7 H1040.2 A1.7 1.7 0 0 1 1038.5 279 V268.6 A1.7 1.7 0 0 1 1040.2 266.9 Z"/>
<path d="M1041.8 267.1 V269.5 H1047 V267.1" stroke-width="1"/>
<circle cx="1044.6" cy="275" r="2.2"/>
<!-- comment -->
<path d="M1039.2 645.4 H1049.9 A1.4 1.4 0 0 1 1051.3 646.8 V655 A1.4 1.4 0 0 1 1049.9 656.4 H1046.5 L1044.6 658.6 L1042.7 656.4 H1039.2 A1.4 1.4 0 0 1 1037.8 655 V646.8 A1.4 1.4 0 0 1 1039.2 645.4 Z" stroke="#b4b4b4"/>
</g>
<path d="M1040.6 648.8 H1048.6 M1040.6 651 H1048.6 M1040.6 653.2 H1045.4" stroke="#b4b4b4" stroke-width="1.1" stroke-linecap="butt"/>

<!-- MODAL ICONS -->
<g stroke="#e2e2e2" stroke-width="1.35">
<!-- doc open: file with lock -->
<path d="M344 187.8 H351.2 L355.3 191.9 V202.2 A1.8 1.8 0 0 1 353.5 204 H344 A1.8 1.8 0 0 1 342.2 202.2 V189.6 A1.8 1.8 0 0 1 344 187.8 Z"/>
<path d="M351.4 188.4 L354.8 191.8" stroke-width=".9"/>
<rect x="345.7" y="195.7" width="6.2" height="5" rx=".9" stroke-width="1.15" fill="#e2e2e2" fill-opacity=".35"/>
<path d="M347.1 195.5 V194.5 A1.7 1.7 0 0 1 350.5 194.5 V195.5" stroke-width="1.1"/>
<!-- permission: file with pen -->
<path d="M448.6 204 H441.2 A1.8 1.8 0 0 1 439.4 202.2 V189.6 A1.8 1.8 0 0 1 441.2 187.8 H448.2 L451 190.6"/>
<path d="M452.9 190.3 L455 192 L449.8 202.6 L446.6 204.2 L446.9 200.9 Z" stroke-width="1.15"/>
<path d="M451.4 192.9 L453.6 194.5" stroke-width=".9"/>
</g>
<!-- help -->
<circle cx="735.5" cy="190.2" r="7" stroke="#7a7a7a" stroke-width="1.1"/>
<path d="M733.3 188.4 A2.2 2.2 0 1 1 735.5 190.7 V192" stroke="#7a7a7a" stroke-width="1.1"/>
<circle cx="735.5" cy="194.1" r=".75" fill="#7a7a7a"/>
<!-- eye closed icons -->
<g stroke="#ececec" stroke-width="1.3">
<path d="M715.3 257.9 Q720 263.6 724.7 257.9"/>
<path d="M717.2 261.6 L716.6 262.6 M720 262.3 V263.5 M722.8 261.6 L723.4 262.6" stroke-width="1.1"/>
<path d="M715.3 314.3 Q720 320 724.7 314.3"/>
<path d="M717.2 318 L716.6 319 M720 318.7 V319.9 M722.8 318 L723.4 319" stroke-width="1.1"/>
</g>
<!-- more options triangle -->
<path d="M391.7 364.1 H395.9 L393.8 367 Z" fill="#3f9fe0" stroke="#3f9fe0" stroke-width=".6"/>
<!-- key emoji -->
<g stroke="none">
<circle cx="347.6" cy="416" r="3.3" fill="#e9b62c"/>
<circle cx="348.6" cy="415" r="1" fill="#2f2f2f"/>
<path d="M345.6 417.4 L341 422 L340.4 423.8 L342.4 423.4 L342.9 422.3 L344 422.2 L344.3 421 L345.5 420.8 L347.2 419 Z" fill="#e9b62c"/>
</g>
<!-- lock emoji -->
<g>
<path d="M342.9 435.2 V433.8 A2.3 2.3 0 0 1 347.5 433.8 V435.2" stroke="#b9b9b9" stroke-width="1.3"/>
<rect x="341.1" y="435" width="8.2" height="6.2" rx="1" fill="#d2c27a" stroke="none"/>
<rect x="341.1" y="435" width="8.2" height="2" rx=".8" fill="#e2d69a" stroke="none"/>
</g>
</svg>

</div></body></html>
